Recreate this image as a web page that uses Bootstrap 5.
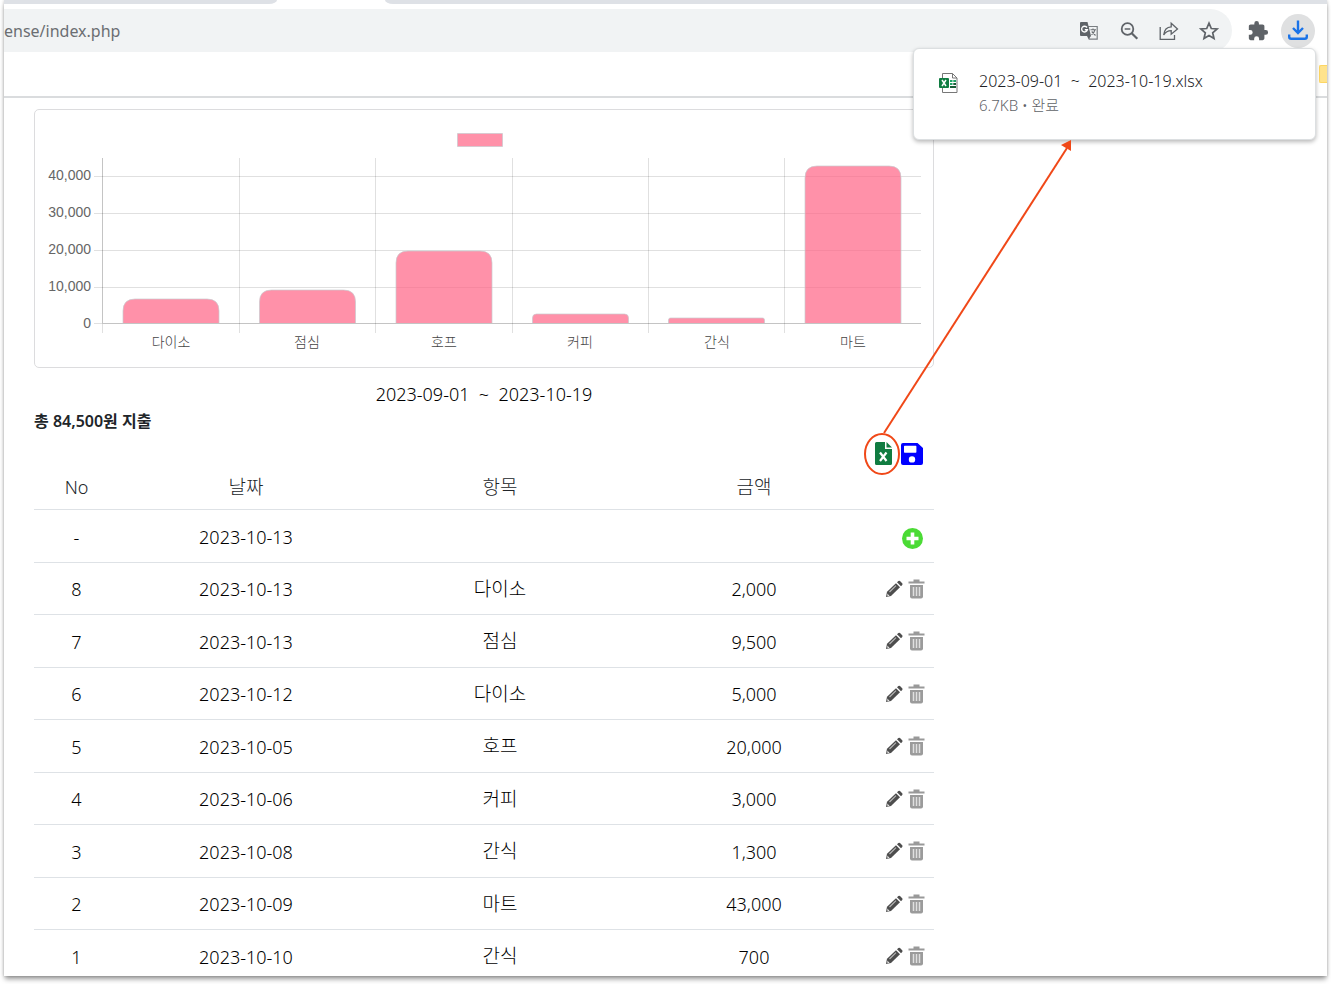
<!DOCTYPE html>
<html lang="ko">
<head>
<meta charset="utf-8">
<meta name="viewport" content="width=device-width, initial-scale=1">
<title>index.php</title>
<link href="https://cdn.jsdelivr.net/npm/bootstrap@5.3.0/dist/css/bootstrap.min.css" rel="stylesheet">
<style>
  body { font-family: "Noto Sans", "Noto Sans CJK KR", sans-serif; font-size: 18px; font-weight: 300; color: #000; background: #fff; }
  .window-frame { height: calc(100vh - 8px); margin: 0 4px 8px; box-shadow: 0 4px 5px -1px rgba(0,0,0,.4), 0 0 3px rgba(0,0,0,.2); background: #fff; }
  .tab-strip { height: 4px; }
  .tab-side { background: #dee1e6; }
  .tab-left { width: 273px; border-bottom-right-radius: 8px 4px; }
  .tab-right { border-bottom-left-radius: 8px 4px; }
  .tab-open { width: 108px; }
  .toolbar { height: 43px; margin-top: 5px; padding-right: 12px; gap: 12px; }
  .omnibox { background: #f1f3f4; border-radius: 0 22px 22px 0; margin-right: 3px; padding-right: 12px; gap: 18px; height: 43px; }
  .omnibox input { font-size: 16px; font-weight: 400; color: #6b6e72; height: 43px; padding: 1px 0 0; }
  .plain-btn { background: none; border: 0; padding: 0; display: inline-flex; line-height: 1; }
  .download-btn { width: 34px; height: 34px; border-radius: 50%; background: #dfe0e1; align-items: center; justify-content: center; }
  .bookmarks { height: 46px; border-bottom: 2px solid #dadcde; }
  .bookmark-folder { width: 8px; height: 18px; margin-top: 13px; background: #ffe38c; border: 1px solid #fdd663; border-right: 0; border-radius: 2px 0 0 2px; }
  .download-pop { top: 48px; right: 11px; width: 403px; height: 92px; border: 1px solid #dcdfe1; border-radius: 6px; box-shadow: 0 2px 4px rgba(0,0,0,.28); padding: 20px 25px; gap: 20px; z-index: 2; }
  .file-icon { margin-top: 3px; }
  .pop-name { font-size: 16px; line-height: 24px; color: #202124; }
  .pop-meta { font-size: 15px; line-height: 24px; color: #5f6368; }
  .ledger { max-width: 930px; padding: 11px 0 0 30px; }
  .chart-card { border: 1px solid #dcdcde; border-radius: 5px; }
  .chart-card text { font-family: "Liberation Sans", "Noto Sans CJK KR", sans-serif; font-size: 14px; font-weight: 300; fill: #666; }
  .chart-card .category { fill: #444; }
  .range-line { margin-top: 13px; line-height: 27px; }
  .total-line { font-size: 16px; line-height: 26px; font-weight: 600; color: #212529; }
  .export-row { height: 30px; margin-top: 4px; padding-right: 11px; gap: 9px; }
  .ledger-table { table-layout: fixed; text-align: center; --bs-table-bg: transparent; color: #000; }
  .ledger-table th { font-weight: 300; color: #212529; height: 41px; padding: 0 0 2px; vertical-align: middle; line-height: 27px; }
  .ledger-table td { height: 52px; padding: 3px 0 0; vertical-align: middle; }
  .ledger-table tbody tr:nth-child(odd) td { height: 53px; }
  .ledger-table .hangul { font-size: 19px; line-height: 27px; }
  .ledger-table td.hangul { padding: 2px 0 0; }
  .col-no { width: 85px; }
  .col-act { width: 53px; }
  .actions { gap: 5px; padding: 0 9px 2px 0; }
  .actions-add { padding: 3px 11px 0 0; }
  .callout-arrow { top: 130px; left: 850px; z-index: 3; pointer-events: none; }
</style>
</head>
<body>
<svg class="d-none" aria-hidden="true">
  <symbol id="pencil" viewBox="0 0 18 18">
    <path d="M1 17l1-5.200L11 3.200l4 4L6 16z" fill="#4d4d4d"/>
    <path d="M12 2.300l1.400-1.300q.8-.7 1.600 0l2.200 2.300q.8.800 0 1.600L16 6.200z" fill="#4d4d4d"/>
    <path d="M4.500 12L11 5.600" stroke="#b5b5b5" stroke-width="1.200"/>
    <path d="M2.200 13.500l2.300 2.300-2 .5z" fill="#e8e8e8"/>
  </symbol>
  <symbol id="trash" viewBox="0 0 17 20">
    <path d="M5.500 1.500h6M.5 3.500h16" stroke="#999" stroke-width="2"/>
    <path d="M2 6h13v11.500q0 2-2 2H4q-2 0-2-2z" fill="#9b9b9b"/>
    <path d="M5.500 8v9M8.500 8v9M11.500 8v9" stroke="#e0e0e0" stroke-width="1.500"/>
  </symbol>
</svg>

<div class="window-frame position-relative">
  <div class="h-100 overflow-hidden">
    <div class="tab-strip d-flex">
      <div class="tab-side tab-left"></div><div class="tab-open"></div><div class="tab-side tab-right flex-grow-1"></div>
    </div>
    <header class="toolbar d-flex align-items-center">
      <div class="omnibox d-flex align-items-center flex-grow-1">
        <input type="text" class="form-control border-0 bg-transparent rounded-0 shadow-none flex-grow-1" aria-label="주소" value="ense/index.php">
        <button class="plain-btn" aria-label="번역"><svg width="22" height="22" viewBox="0 0 22 22">
          <path d="M9.500 6.500h9.700v12.700h-8z" fill="#f1f3f4" stroke="#7a7e82" stroke-width="1.200"/>
          <path d="M3 2h6.500l3.500 14H3q-1 0-1-1V3q0-1 1-1z" fill="#5f6368"/><path d="M9 16h4l-2.500 3z" fill="#5f6368"/>
          <path d="M9 7.500a2.900 2.900 0 1 0 .4 2.200H6.800" fill="none" stroke="#fff" stroke-width="1.400"/>
          <path d="M12.500 9.700h5.500M15 8.500v1.200M17 9.700c-.5 2.500-2 4-3.500 5M13.700 11.500l3.800 4" fill="none" stroke="#6b6f73" stroke-width="1.100"/>
        </svg></button>
        <button class="plain-btn" aria-label="축소"><svg width="22" height="22" viewBox="0 0 22 22" fill="none" stroke="#5f6368"><circle cx="9.500" cy="9" r="5.800" stroke-width="1.800"/><path d="M13.700 13.300l5.600 5.500" stroke-width="2.200"/><path d="M6.700 9h5.600" stroke-width="1.500"/></svg></button>
        <button class="plain-btn" aria-label="공유"><svg width="22" height="22" viewBox="0 0 22 22" fill="none" stroke="#5f6368" stroke-width="1.300"><path d="M2.200 7v12.300h14.300V15"/><path d="M5.700 15c.5-5 3-8 7.500-8.200V3.300L19.500 9l-6.300 5.200v-3.500c-3.500 0-5.500 1-7.500 4.300z"/></svg></button>
        <button class="plain-btn" aria-label="북마크"><svg width="22" height="22" viewBox="0 0 22 22"><path d="M11 3.200l2.300 5.300 5.800.5-4.400 3.800 1.300 5.700-5-3-5 3 1.300-5.700L2.900 9l5.800-.5z" fill="none" stroke="#5f6368" stroke-width="1.700"/></svg></button>
      </div>
      <button class="plain-btn" aria-label="확장 프로그램"><svg width="22" height="22" viewBox="0 0 24 24"><path fill="#5f6368" d="M20.500 11H19V7c0-1.100-.9-2-2-2h-4V3.500a2.500 2.500 0 0 0-5 0V5H4c-1.100 0-2 .9-2 2v3.800h1.500a2.700 2.700 0 0 1 0 5.400H2V20c0 1.100.9 2 2 2h3.800v-1.500a2.700 2.700 0 0 1 5.400 0V22H17c1.100 0 2-.9 2-2v-4h1.500a2.500 2.500 0 0 0 0-5z"/></svg></button>
      <button class="plain-btn download-btn" aria-label="다운로드"><svg width="22" height="22" viewBox="0 0 22 22" fill="none" stroke="#1a73e8" stroke-width="2.400"><path d="M11 .5v12M6 8l5 5 5-5"/><path d="M2.200 14.500v2.300q0 2 2 2h13.600q2 0 2-2v-2.300"/></svg></button>
    </header>
    <div class="bookmarks d-flex justify-content-end"><div class="bookmark-folder"></div></div>

    <main class="ledger">
      <div class="chart-card">
        <svg class="d-block w-100" viewBox="35 110 898 257" role="img" aria-label="항목별 지출">
          <g stroke="#000" stroke-opacity=".12">
            <path d="M94 176.500H921M94 213.500H921M94 250.500H921M94 287.500H921M94 323.500H921"/>
            <path d="M102.500 158V333M239.500 158V333M375.500 158V333M512.500 158V333M648.500 158V333M784.500 158V333"/>
            <path d="M102.500 158V323M103 323.500H921"/>
          </g>
          <g fill="#ff6384" fill-opacity=".7" stroke="#c9cbcf" stroke-opacity=".7">
            <path d="M457.500 133.500h45v13h-45z"/>
            <path d="M123 323V311q0-12 12-12h72q12 0 12 12v12"/>
            <path d="M259.500 323V302q0-12 12-12h72q12 0 12 12v21"/>
            <path d="M396 323V263q0-12 12-12h72q12 0 12 12v60"/>
            <path d="M532.500 323V318q0-4 4-4h88q4 0 4 4v5"/>
            <path d="M668.500 323V320q0-2 2-2h92q2 0 2 2v3"/>
            <path d="M805 323V178q0-12 12-12h72q12 0 12 12v145"/>
          </g>
          <g text-anchor="end">
            <text x="91" y="180">40,000</text><text x="91" y="217">30,000</text><text x="91" y="254">20,000</text><text x="91" y="291">10,000</text><text x="91" y="328">0</text>
          </g>
          <g text-anchor="middle">
            <text class="category" x="171" y="347">다이소</text><text class="category" x="307" y="347">점심</text><text class="category" x="444" y="347">호프</text><text class="category" x="580" y="347">커피</text><text class="category" x="717" y="347">간식</text><text class="category" x="853" y="347">마트</text>
          </g>
        </svg>
      </div>

      <div class="range-line text-center">2023-09-01 &nbsp;~&nbsp; 2023-10-19</div>
      <div class="total-line">총 84,500원 지출</div>

      <div class="export-row d-flex justify-content-end align-items-center">
        <button class="plain-btn" aria-label="엑셀"><svg width="17" height="23" viewBox="0 0 17 23"><path d="M0 1.500Q0 0 1.500 0H10v7h7v14.500q0 1.500-1.500 1.500h-14Q0 23 0 21.500z" fill="#107c41"/><path d="M11.500 0L17 5.500h-5.500z" fill="#107c41"/><path d="M5 10.500l6.500 8.500M11.500 10.500L5 19" stroke="#fff" stroke-width="2.200"/></svg></button>
        <button class="plain-btn" aria-label="저장"><svg width="22" height="23" viewBox="0 -1 22 23"><path fill="#00f" fill-rule="evenodd" d="M2 0h14.500L22 5v15q0 2-2 2H2q-2 0-2-2V2q0-2 2-2zM3 3.500V9q0 .7.700.7h11q.7 0 .7-.7V3.500q0-.7-.7-.7h-11q-.7 0-.7.700zM11 13.200a3.200 3.200 0 1 0 0 6.400 3.200 3.200 0 0 0 0-6.400z"/></svg></button>
      </div>

      <table class="table ledger-table mb-0">
        <colgroup><col class="col-no"><col><col><col><col class="col-act"></colgroup>
        <thead><tr><th scope="col">No</th><th scope="col" class="hangul">날짜</th><th scope="col" class="hangul">항목</th><th scope="col" class="hangul">금액</th><th></th></tr></thead>
        <tbody id="rows">
          <tr><td>-</td><td>2023-10-13</td><td></td><td></td><td><div class="d-flex justify-content-end actions-add"><button class="plain-btn" aria-label="추가"><svg width="21" height="21" viewBox="0 0 21 21"><circle cx="10.500" cy="10.500" r="10.500" fill="#4bdb35"/><path d="M10.500 4.500v12M4.500 10.500h12" stroke="#fff" stroke-width="3.600"/></svg></button></div></td></tr>
        </tbody>
      </table>
    </main>
  </div>

  <aside class="download-pop position-absolute bg-white d-flex">
    <svg class="file-icon flex-shrink-0" width="20" height="22" viewBox="0 0 20 22">
      <path d="M3.500 1.500h10l4.500 4.500v14.500H3.500z" fill="#fff" stroke="#777"/><path d="M13.500 1.500V6H18" fill="none" stroke="#777"/>
      <path d="M11 8h2.500v2H11zM11 11h2.500v2H11zM14.300 8H17v2h-2.700z" fill="#21a366"/><path d="M14.300 11H17v2h-2.700zM11 14h6v2h-6z" fill="#185c37"/>
      <rect x="0" y="6" width="10" height="10" rx="1" fill="#107c41"/><path d="M3 8l4 6M7 8l-4 6" stroke="#fff" stroke-width="1.500"/>
    </svg>
    <div>
      <div class="pop-name">2023-09-01 &nbsp;~&nbsp; 2023-10-19.xlsx</div>
      <div class="pop-meta">6.7KB • 완료</div>
    </div>
  </aside>
  <svg class="callout-arrow position-absolute" width="230" height="350" viewBox="854 130 230 350" aria-hidden="true">
    <ellipse cx="882" cy="454" rx="17" ry="20" fill="none" stroke="#f04818" stroke-width="2"/>
    <path d="M884 433L1067 148" stroke="#f04818" stroke-width="2"/>
    <path d="M1071 140V151L1061 145z" fill="#f04818"/>
  </svg>
</div>
<script src="https://cdn.jsdelivr.net/npm/bootstrap@5.3.0/dist/js/bootstrap.bundle.min.js"></script>
<script>
  const entries = [
    [8, "2023-10-13", "다이소", "2,000"], [7, "2023-10-13", "점심", "9,500"],
    [6, "2023-10-12", "다이소", "5,000"], [5, "2023-10-05", "호프", "20,000"],
    [4, "2023-10-06", "커피", "3,000"], [3, "2023-10-08", "간식", "1,300"],
    [2, "2023-10-09", "마트", "43,000"], [1, "2023-10-10", "간식", "700"]
  ];
  document.getElementById("rows").insertAdjacentHTML("beforeend", entries.map(([no, date, item, amount]) => `
    <tr><td>${no}</td><td>${date}</td><td class="hangul">${item}</td><td>${amount}</td>
    <td><div class="d-flex justify-content-end align-items-center actions">
      <button class="plain-btn" aria-label="수정"><svg width="18" height="18"><use href="#pencil"/></svg></button>
      <button class="plain-btn" aria-label="삭제"><svg width="17" height="20"><use href="#trash"/></svg></button>
    </div></td></tr>`).join(""));
</script>
</body>
</html>
